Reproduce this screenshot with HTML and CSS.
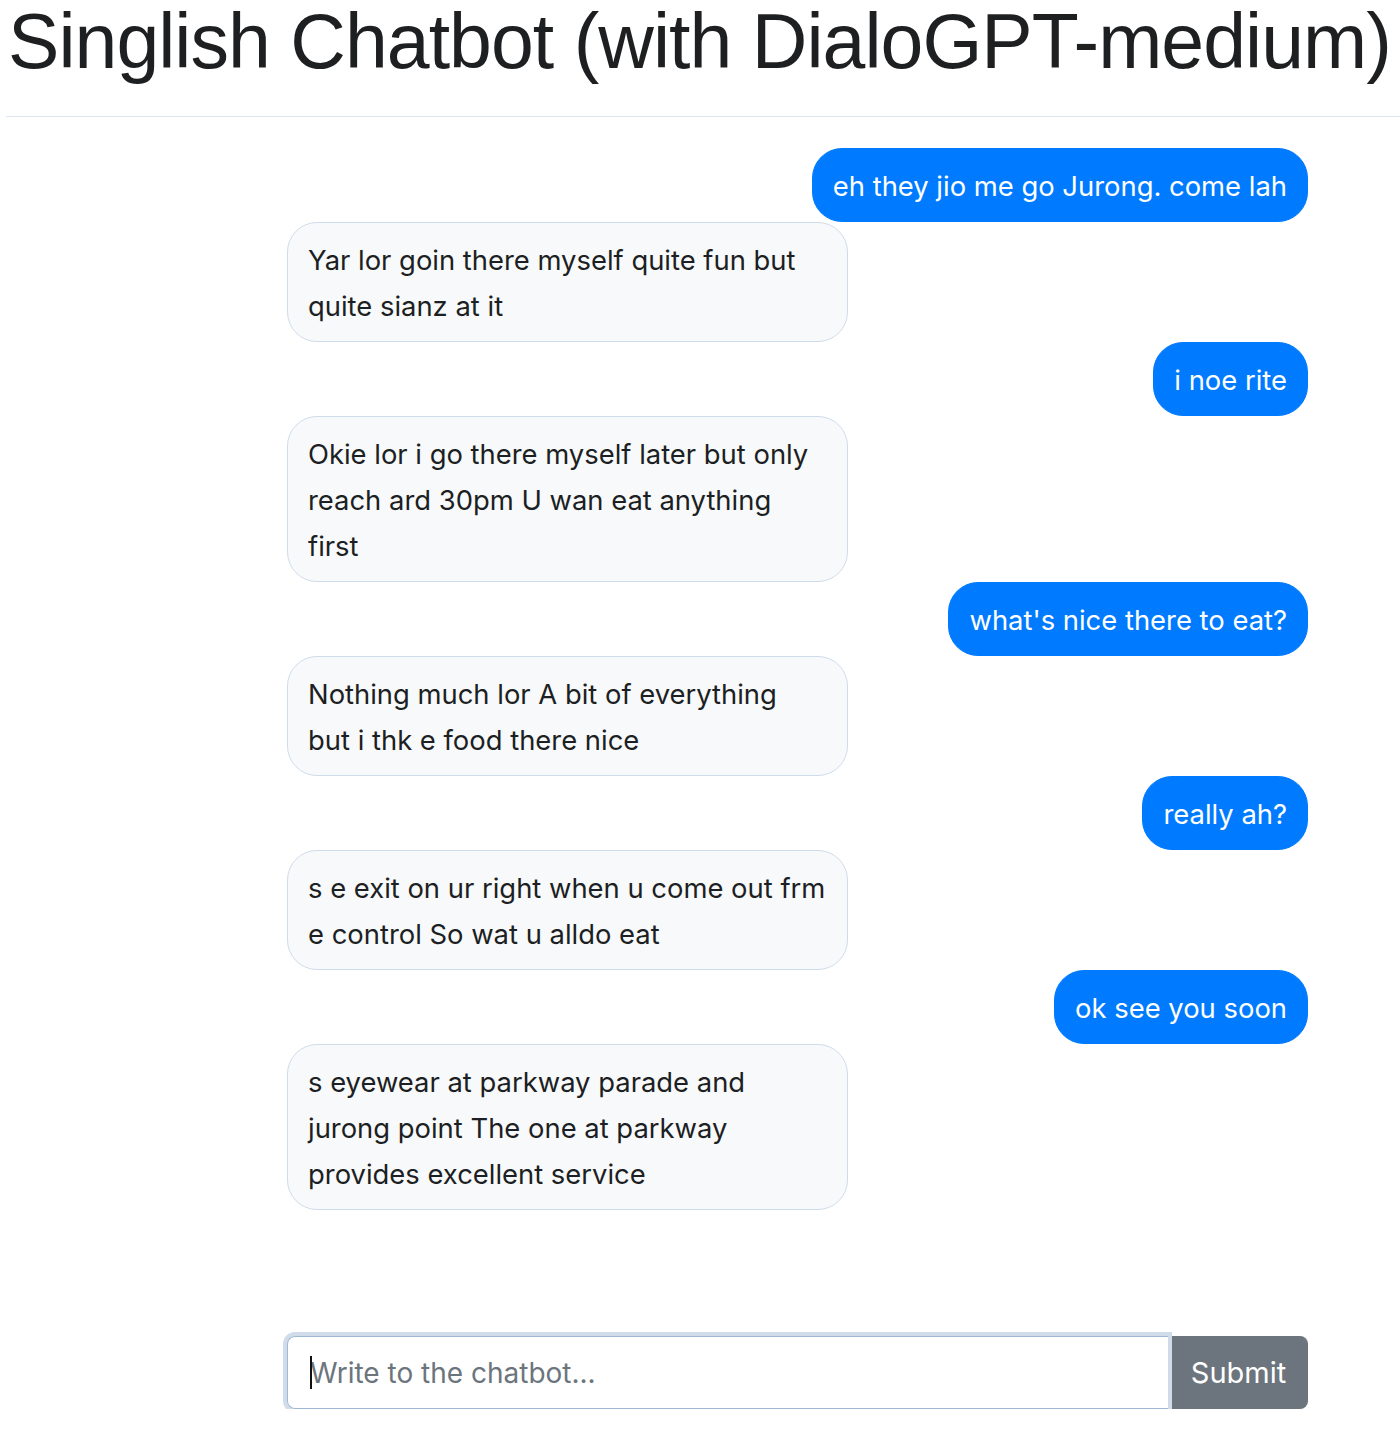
FILE: index.html
```html
<!DOCTYPE html>
<html lang="en">
<head>
<meta charset="utf-8">
<title>Singlish Chatbot</title>
<link rel="stylesheet" href="styles.css">
</head>
<body>
<h1 class="title">Singlish Chatbot (with DialoGPT-medium)</h1>
<hr class="rule">
<main class="chat">
  <div class="messages">
    <div class="msg user">eh they jio me go Jurong. come lah</div>
    <div class="msg bot">Yar lor goin there myself quite fun but<br>quite sianz at it</div>
    <div class="msg user">i noe rite</div>
    <div class="msg bot">Okie lor i go there myself later but only<br>reach ard 30pm U wan eat anything<br>first</div>
    <div class="msg user">what's nice there to eat?</div>
    <div class="msg bot">Nothing much lor A bit of everything<br>but i thk e food there nice</div>
    <div class="msg user">really ah?</div>
    <div class="msg bot">s e exit on ur right when u come out frm<br>e control So wat u alldo eat</div>
    <div class="msg user">ok see you soon</div>
    <div class="msg bot">s eyewear at parkway parade and<br>jurong point The one at parkway<br>provides excellent service</div>
  </div>
  <form class="composer">
    <div class="field">
      <span class="caret"></span>
      <input class="input" type="text" placeholder="Write to the chatbot...">
    </div>
    <button class="submit" type="button">Submit</button>
  </form>
</main>
</body>
</html>
```
FILE: styles.css
```css
html, body {
  margin: 0;
  padding: 0;
  background: #ffffff;
}
body {
  width: 1400px;
  font-family: Inter, "Noto Sans", sans-serif;
  color: #212529;
}
.title {
  margin: 0;
  padding: 3px 0 0 8px;
  font-family: "Liberation Sans", Arial, sans-serif;
  font-weight: 400;
  font-size: 77px;
  letter-spacing: -0.97px;
  line-height: 1;
  color: #1e1f21;
  white-space: nowrap;
}
.rule {
  margin: 36px 0 0 6px;
  border: 0;
  border-top: 1px solid #dde6ef;
  height: 0;
}
.chat {
  margin: 31px 0 0 287px;
  width: 1021px;
}
.messages {
  display: flex;
  flex-direction: column;
}
.msg {
  font-size: 27.4px;
  line-height: 46px;
  padding: 14px 20px 12px;
  border-radius: 30px;
  border: 1px solid transparent;
  white-space: nowrap;
}
.user {
  align-self: flex-end;
  background: #007bff;
  border-color: #007bff;
  color: #ffffff;
}
.bot {
  align-self: flex-start;
  width: 519px;
  background: #f8f9fa;
  border-color: #cfdceb;
  color: #1c1f23;
}
.composer {
  display: flex;
  margin-top: 126px;
}
.field {
  position: relative;
  flex: 1;
  display: flex;
  border-radius: 8px 0 0 8px;
  box-shadow: 0 0 0 4px #d0dcea;
}
.input {
  flex: 1;
  height: 73px;
  box-sizing: border-box;
  margin: 0;
  padding: 0 22px;
  font-family: Inter, "Noto Sans", sans-serif;
  font-size: 28px;
  color: #495057;
  background: #ffffff;
  border: 1px solid #9fb8d3;
  border-right: 0;
  border-radius: 8px 0 0 8px;
  outline: none;
}
.input::placeholder {
  color: #6c757d;
}
.caret {
  position: absolute;
  left: 23px;
  top: 20px;
  width: 2px;
  height: 33px;
  background: #111111;
}
.submit {
  width: 140px;
  height: 73px;
  margin: 0;
  padding: 0;
  font-family: Inter, "Noto Sans", sans-serif;
  font-size: 29px;
  color: #ffffff;
  background: #6c757d;
  border: 1px solid #6c757d;
  border-left: 2px solid #3b6fb6;
  border-radius: 0 8px 8px 0;
}
```
